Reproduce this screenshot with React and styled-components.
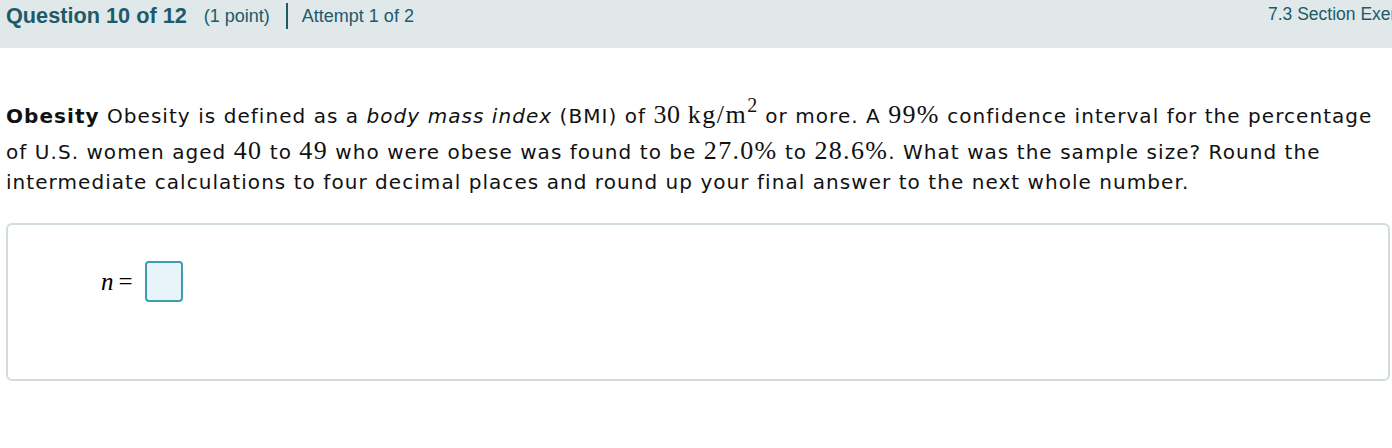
import styled, { createGlobalStyle } from "styled-components";

const Global = createGlobalStyle`
  html, body {
    margin: 0;
    padding: 0;
    background: #ffffff;
    overflow: hidden;
  }
`;

const App = () => {
  return (
    <Page>
      <Global />
      <Header>
        <HeaderLeft>
          <QTitle>Question 10 of 12</QTitle>
          <Points>(1 point)</Points>
          <Divider />
          <Attempt>Attempt 1 of 2</Attempt>
        </HeaderLeft>
        <Section>7.3 Section Exercises</Section>
      </Header>
      <Body>
        <Prompt>
          <b>Obesity</b> Obesity is defined as a <i>body mass index</i> (BMI) of{" "}
          <MathBlock>30 <Unit>kg/m</Unit><Sup>2</Sup></MathBlock> or more. A <Math>99%</Math> confidence
          interval for the percentage of U.S. women aged <Math>40</Math> to{" "}
          <Math>49</Math> who were obese was found to be <Math>27.0%</Math> to{" "}
          <Math>28.6%</Math>. What was the sample size? Round the intermediate
          calculations to four decimal places and round up your final answer to
          the next whole number.
        </Prompt>
        <AnswerCard>
          <AnswerRow>
            <Var>n</Var>
            <Eq>=</Eq>
            <AnswerInput />
          </AnswerRow>
        </AnswerCard>
      </Body>
    </Page>
  );
};

const Page = styled.div`
  width: 1392px;
  height: 448px;
  overflow: hidden;
`;

const Header = styled.div`
  height: 48px;
  background-color: #e0e8ea;
  display: flex;
  align-items: flex-start;
  color: #205a69;
  font-family: "Liberation Sans", Arial, sans-serif;
  white-space: nowrap;
`;

const HeaderLeft = styled.div`
  flex: 1;
  display: flex;
  align-items: center;
  padding: 3px 0 0 6px;
`;

const QTitle = styled.span`
  font-size: 21.7px;
  font-weight: bold;
`;

const Points = styled.span`
  font-size: 18px;
  margin-left: 17px;
`;

const Divider = styled.span`
  display: inline-block;
  width: 2px;
  height: 26px;
  background-color: #205a69;
  margin: 0 14px 0 16px;
`;

const Attempt = styled.span`
  font-size: 18px;
`;

const Section = styled.span`
  flex-shrink: 0;
  width: 124px;
  overflow: hidden;
  font-size: 17.5px;
  padding-top: 4px;
`;

const Body = styled.div`
  padding: 0 2px 0 6px;
`;

const Prompt = styled.p`
  margin: 52px 0 0 0;
  font-family: "DejaVu Sans", Verdana, sans-serif;
  font-size: 20px;
  letter-spacing: 1.05px;
  line-height: 30px;
  color: #111;
`;

const Math = styled.span`
  font-family: "Liberation Serif", "Times New Roman", serif;
  font-size: 26px;
  letter-spacing: 1.3px;
  line-height: 0;
`;

const MathBlock = styled(Math)`
  display: inline-block;
  line-height: 30px;
  padding-bottom: 7px;
  vertical-align: baseline;
  letter-spacing: 0.6px;
`;

const Unit = styled.span`
  letter-spacing: 1.5px;
`;

const Sup = styled.sup`
  font-size: 20px;
  vertical-align: 11px;
  line-height: 0;
`;

const AnswerCard = styled.div`
  margin-top: 26px;
  height: 158px;
  border: 2px solid #d3dde0;
  border-radius: 6px;
  box-sizing: border-box;
`;

const AnswerRow = styled.div`
  display: flex;
  align-items: center;
  padding: 36px 0 0 93px;
`;

const Var = styled.span`
  font-family: "Liberation Serif", "Times New Roman", serif;
  font-style: italic;
  font-size: 25px;
`;

const Eq = styled.span`
  font-family: "Liberation Serif", "Times New Roman", serif;
  font-size: 25px;
  margin: 0 12px 0 5px;
`;

const AnswerInput = styled.div`
  width: 38px;
  height: 41px;
  box-sizing: border-box;
  border: 2px solid #3f9db3;
  border-radius: 4px;
  background-color: #e7f5fa;
`;

export default App;
